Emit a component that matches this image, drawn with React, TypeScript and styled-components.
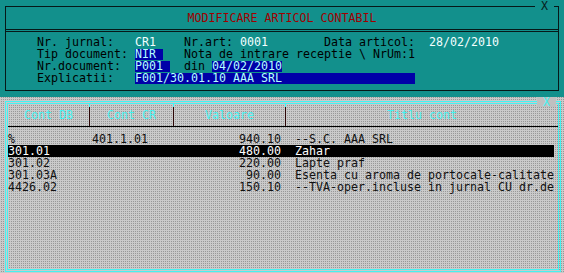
import React from "react";
import styled, { createGlobalStyle } from "styled-components";

const GlobalStyle = createGlobalStyle`
  html, body {
    margin: 0;
    padding: 0;
    overflow: hidden;
    background: #bcbcbc;
  }
  body {
    font-family: "DejaVu Sans Mono", "Liberation Mono", monospace;
  }
`;

const Screen = styled.div`
  width: 564px;
  height: 273px;
  display: flex;
  flex-direction: column;
  font-size: 11.63px;
`;

const TopPanel = styled.div`
  height: 97px;
  box-sizing: border-box;
  padding: 6px 5px 0 5px;
  background: #12908c;
`;

const Frame = styled.div`
  position: relative;
  height: 85px;
  box-sizing: border-box;
  border: 1px solid #061818;
`;

const CloseMark = styled.span<{ $bg: string; $color: string; $top: number; $right: number }>`
  position: absolute;
  top: ${(p) => p.$top}px;
  right: ${(p) => p.$right}px;
  padding: 0 6px;
  line-height: 10px;
  height: 10px;
  background: ${(p) => p.$bg};
  color: ${(p) => p.$color};
`;

const TitleBar = styled.div`
  height: 22px;
  line-height: 22px;
  text-align: center;
  color: #a00000;
  border-bottom: 3px double #061818;
`;

const Fields = styled.div`
  padding: 4px 0 0 31px;
`;

const Line = styled.div`
  height: 12px;
  line-height: 12px;
  white-space: pre;
  color: #000;
`;

const Value = styled.span`
  color: #f4ffff;
`;

const Hl = styled.span`
  display: inline-block;
  height: 11px;
  line-height: 11px;
  background: #0000a8;
  color: #b4ffff;
  white-space: pre;
`;

const BottomPanel = styled.div`
  flex: 1;
  box-sizing: border-box;
  padding: 4px 3px 1px 5px;
  background-color: #c8c8c8;
  background-image: repeating-conic-gradient(#989898 0 25%, #cacaca 0 100%);
  background-size: 2px 2px;
`;

const Grid = styled.div`
  position: relative;
  height: 171px;
  box-sizing: border-box;
  border: 3px double #45f2f2;
`;

const Header = styled.div`
  display: grid;
  grid-template-columns: 81px 1px 83px 1px 111px 1px 1fr;
  height: 22px;
  border-bottom: 1px solid #000;
`;

const HeaderCell = styled.div`
  line-height: 22px;
  text-align: center;
  color: #48f4f4;
`;

const Sep = styled.div`
  background: linear-gradient(#45f2f2 0 3px, #2c0606 3px);
`;

const Rows = styled.div`
  padding-top: 6px;
`;

const Row = styled.div<{ $selected?: boolean }>`
  width: 546px;
  height: 12px;
  line-height: 12px;
  white-space: pre;
  background: ${(p) => (p.$selected ? "#000" : "transparent")};
  color: ${(p) => (p.$selected ? "#fff" : "#111")};
`;

const entries = [
  { db: "%", cr: "401.1.01", val: "940.10", title: "--S.C. AAA SRL" },
  { db: "301.01", cr: "", val: "480.00", title: "Zahar" },
  { db: "301.02", cr: "", val: "220.00", title: "Lapte praf" },
  { db: "301.03A", cr: "", val: "90.00", title: "Esenta cu aroma de portocale-calitate" },
  { db: "4426.02", cr: "", val: "150.10", title: "--TVA-oper.incluse in jurnal CU dr.de" },
];

const App = () => {
  const selected = 1;

  return (
    <Screen>
      <GlobalStyle />
      <TopPanel>
        <Frame>
          <CloseMark $bg="#12908c" $color="#062020" $top={-6} $right={4}>X</CloseMark>
          <TitleBar>MODIFICARE ARTICOL CONTABIL</TitleBar>
          <Fields>
            <Line>
              {"Nr. jurnal:   "}<Value>CR1</Value>{"    Nr.art: "}<Value>0001</Value>
              {"        Data articol:  "}<Value>28/02/2010</Value>
            </Line>
            <Line>
              {"Tip document: "}<Hl>{"NIR "}</Hl>{"   Nota de intrare receptie \\ NrUm:1"}
            </Line>
            <Line>
              {"Nr.document:  "}<Hl>{"P001 "}</Hl>{"  din "}<Hl>04/02/2010</Hl>
            </Line>
            <Line>
              {"Explicatii:   "}<Hl>{"F001/30.01.10 AAA SRL".padEnd(40)}</Hl>
            </Line>
          </Fields>
        </Frame>
      </TopPanel>
      <BottomPanel>
        <Grid>
          <CloseMark $bg="#c0c0c0" $color="#45f2f2" $top={-7} $right={2}>X</CloseMark>
          <Header>
            <HeaderCell>Cont DB</HeaderCell>
            <Sep />
            <HeaderCell>Cont CR</HeaderCell>
            <Sep />
            <HeaderCell>Valoare</HeaderCell>
            <Sep />
            <HeaderCell>Titlu cont</HeaderCell>
          </Header>
          <Rows>
            {entries.map((e, i) => (
              <Row key={e.db} $selected={i === selected}>
                {e.db.padEnd(12) + e.cr.padEnd(15) + e.val.padStart(12) + "  " + e.title.padEnd(37)}
              </Row>
            ))}
          </Rows>
        </Grid>
      </BottomPanel>
    </Screen>
  );
};

export default App;
